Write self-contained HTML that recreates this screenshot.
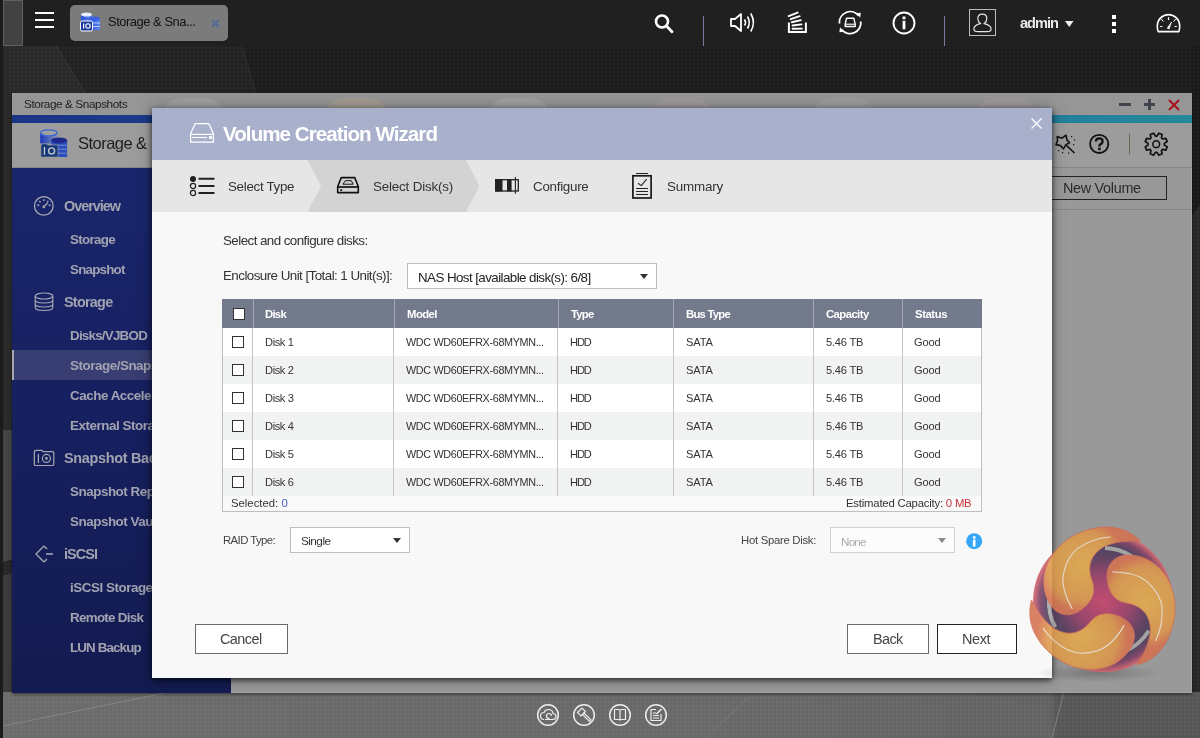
<!DOCTYPE html>
<html><head><meta charset="utf-8">
<style>
*{margin:0;padding:0;box-sizing:border-box}
html,body{width:1200px;height:738px;overflow:hidden}
body{position:relative;background:#242424;font-family:"Liberation Sans",sans-serif}
.a{position:absolute}
.t{position:absolute;white-space:nowrap;font-family:"Liberation Sans",sans-serif;will-change:transform}
.dots{background-image:radial-gradient(rgba(255,255,255,0.03) 1px, transparent 1.2px);background-size:4px 4px}
svg{position:absolute;overflow:visible}
</style></head><body>

<!-- ============ DESKTOP ============ -->
<div class="a" style="left:0;top:46px;width:1200px;height:692px;background:#1d1d1d"></div>
<svg style="left:0;top:0" width="1200" height="738">
<polygon points="3,46 56,46 85,93 12,93 12,430 3,430" fill="#292929"/>
<polygon points="56,46 242,46 256,93 85,93" fill="#232323"/>
<polygon points="3,420 12,415 12,560 3,562" fill="#424242"/>
<polygon points="3,430 12,430 12,415 3,420" fill="#292929"/>
<polygon points="3,575 12,573 12,692 3,692" fill="#3a3a3a"/>
<polygon points="3,562 12,560 12,573 3,575" fill="#262626"/>
<polygon points="1192,46 1200,46 1200,205 1192,215" fill="#1a1a1a"/>
<polygon points="1192,215 1200,205 1200,692 1192,692" fill="#282828"/>
</svg>
<div class="a dots" style="left:0;top:46px;width:1200px;height:646px"></div>
<div class="a" style="left:0;top:0;width:3px;height:738px;background:#1a1c1c"></div>
<!-- bottom band -->
<div class="a" style="left:3px;top:692px;width:1197px;height:46px;background:linear-gradient(90deg,#6c6c6c 0%,#696969 60%,#636363 87.5%,#575757 88%,#575757 100%)"></div><div class="a" style="left:3px;top:692px;width:1197px;height:46px;background-image:radial-gradient(rgba(255,255,255,0.045) 0.9px, transparent 1.3px);background-size:4px 4px"></div>
<svg style="left:0;top:0" width="1200" height="738"><line x1="3" y1="726" x2="170" y2="692" stroke="#8a8a8a" stroke-width="0.8"/><line x1="1064" y1="692" x2="1052" y2="738" stroke="#8a8a8a" stroke-width="0.8"/><line x1="755" y1="692" x2="705" y2="738" stroke="#7e7e7e" stroke-width="0.7"/><line x1="56" y1="46" x2="85" y2="93" stroke="#3c3c3c" stroke-width="0.9"/><line x1="242" y1="46" x2="256" y2="93" stroke="#333" stroke-width="0.8"/></svg>

<!-- ============ TOP BAR ============ -->
<div class="a" style="left:0;top:0;width:1200px;height:46px;background:#202020"></div>
<div class="a" style="left:0;top:0;width:3px;height:46px;background:#1a1c1c"></div>
<div class="a" style="left:3px;top:0;width:20px;height:46px;background:#424242;border:1px solid #5f5f5f"></div>
<!-- hamburger -->
<div class="a" style="left:35px;top:12px;width:19px;height:2px;background:#fff"></div>
<div class="a" style="left:35px;top:19px;width:19px;height:2px;background:#fff"></div>
<div class="a" style="left:35px;top:26px;width:19px;height:2px;background:#fff"></div>
<!-- tab -->
<div class="a" style="left:70px;top:5px;width:158px;height:36px;background:#7b7b7b;border-radius:5px"></div>
<svg style="left:80px;top:12px" width="20" height="20" viewBox="0 0 20 20">
  <defs><linearGradient id="dbg" x1="0" x2="1"><stop offset="0" stop-color="#2a4fd8"/><stop offset="1" stop-color="#5a86f0"/></linearGradient></defs>
  <rect x="1" y="2" width="11" height="12" fill="url(#dbg)"/><ellipse cx="6.5" cy="2.5" rx="5.5" ry="2" fill="#e8f0ff"/>
  <rect x="9" y="6" width="11" height="12" fill="url(#dbg)"/><ellipse cx="14.5" cy="6.5" rx="5.5" ry="2" fill="#3a5fe0"/>
  <line x1="12" y1="11" x2="20" y2="11" stroke="#cfe0ff" stroke-width="0.8"/><line x1="12" y1="14.5" x2="20" y2="14.5" stroke="#cfe0ff" stroke-width="0.8"/>
  <rect x="0.5" y="9" width="12" height="10" rx="1.5" fill="#1e3c9a" stroke="#fff" stroke-width="1"/>
  <rect x="3" y="11.5" width="1.2" height="5" fill="#fff"/><circle cx="8" cy="14" r="2.2" fill="none" stroke="#fff" stroke-width="1.1"/>
</svg>
<svg style="left:211px;top:19px" width="9" height="9" viewBox="0 0 9 9"><path d="M1 1L8 8M8 1L1 8" stroke="#4f6f96" stroke-width="2.2"/></svg>
<!-- search -->
<svg style="left:654px;top:13px" width="20" height="21" viewBox="0 0 20 21"><circle cx="8" cy="8.5" r="6" fill="none" stroke="#fff" stroke-width="2.6"/><path d="M12.5 13L18 18.8" stroke="#fff" stroke-width="2.8" stroke-linecap="round"/></svg>
<div class="a" style="left:703px;top:16px;width:1.2px;height:30px;background:#7a79a0"></div>
<!-- speaker -->
<svg style="left:730px;top:12px" width="26" height="21" viewBox="0 0 26 21"><path d="M1 7H5L11 2V19L5 14H1Z" fill="none" stroke="#fff" stroke-width="1.8" stroke-linejoin="round"/><path d="M14.5 7.5Q16.5 10.5 14.5 13.5" fill="none" stroke="#fff" stroke-width="1.6"/><path d="M17.5 4.5Q21 10.5 17.5 16.5" fill="none" stroke="#fff" stroke-width="1.6"/><path d="M20.8 1.5Q26 10.5 20.8 19.5" fill="none" stroke="#fff" stroke-width="1.6"/></svg>
<!-- stack -->
<svg style="left:780px;top:5px" width="90" height="35" viewBox="780 5 90 35">
<path d="M788.9 22.6V32.1H805.9V22.6" fill="none" stroke="#fff" stroke-width="2"/>
<path d="M788.6 16.1L797.6 12.6M790.7 19.2L799.6 16.2M791.8 22.2L800.8 20.1M792.6 25.5L801.5 24.4M792.6 28.8L801.9 28.6" stroke="#fff" stroke-width="1.9" stroke-linecap="round"/>
<!-- sync -->
<path d="M839.4 23.5A10.8 10.8 0 0 1 858.5 15.6" fill="none" stroke="#fff" stroke-width="1.8"/>
<path d="M860.8 21.5A10.8 10.8 0 0 1 841.6 29.5" fill="none" stroke="#fff" stroke-width="1.8"/>
<path d="M856.2 13.2L860.8 12.8L860.2 17.8Z" fill="#fff"/>
<path d="M844 31.8L839.4 32.2L840 27.2Z" fill="#fff"/>
<path d="M846.6 18.2H853.8L855.2 24.2V26.5H845.2V24.2Z" fill="none" stroke="#fff" stroke-width="1.4" stroke-linejoin="round"/>
<path d="M845.2 24.2H855.2" stroke="#fff" stroke-width="1.1"/>
</svg>
<!-- info -->
<svg style="left:892px;top:11px" width="24" height="24" viewBox="0 0 24 24"><circle cx="12" cy="12" r="10.5" fill="none" stroke="#fff" stroke-width="1.9"/><rect x="10.6" y="5.5" width="2.8" height="2.8" fill="#fff"/><rect x="10.6" y="9.8" width="2.8" height="8.5" fill="#fff"/></svg>
<div class="a" style="left:944px;top:16px;width:1.2px;height:30px;background:#7a79a0"></div>
<!-- avatar -->
<div class="a" style="left:969px;top:9px;width:27px;height:27px;border:1.5px solid #bcbcbc"></div>
<svg style="left:960px;top:5px" width="40" height="35" viewBox="960 5 40 35"><path d="M980.3 23.6C978.2 22 977.8 19.5 977.8 18.2C977.8 15.6 979.8 14.1 982.3 14.1C984.8 14.1 986.8 15.6 986.8 18.2C986.8 19.5 986.4 22 984.3 23.6C988 24.5 991.1 26.2 991.1 29C991.1 31 989.5 31.7 987 31.7H978C975.5 31.7 973.9 31 973.9 29C973.9 26.2 976.6 24.5 980.3 23.6Z" fill="none" stroke="#e4e4e4" stroke-width="1.2"/></svg>
<svg style="left:1065px;top:21px" width="9" height="7" viewBox="0 0 9 7"><path d="M0 0H8.5L4.25 6Z" fill="#eee"/></svg>
<div class="a" style="left:1112px;top:15px;width:4.2px;height:4px;background:#fff"></div>
<div class="a" style="left:1112px;top:22px;width:4.2px;height:4px;background:#fff"></div>
<div class="a" style="left:1112px;top:29px;width:4.2px;height:4px;background:#fff"></div>
<!-- gauge -->
<svg style="left:1150px;top:8px" width="40" height="30" viewBox="1150 8 40 30"><path d="M1158.2 31.6C1157.6 30.5 1157.3 27.5 1157.3 25.8A11.2 11.2 0 0 1 1179.7 25.8C1179.7 27.5 1179.4 30.5 1178.8 31.6Z" fill="none" stroke="#fff" stroke-width="1.6" stroke-linejoin="round"/><path d="M1168.5 17.3V19.9M1176.8 26.5H1174.6M1160.2 26.5H1162.4" stroke="#fff" stroke-width="1.2"/><path d="M1161.3 19L1163.4 21.6M1175.7 19L1173.6 21.6" stroke="#fff" stroke-width="1"/><path d="M1167.2 28.2L1171.6 22L1169.1 28.9Z" fill="#fff" stroke="#fff" stroke-width="0.6" stroke-linejoin="round"/></svg>
<div class="t" style="left:107.6px;top:15.66px;font-size:12.875px;line-height:12.875px;color:#111;letter-spacing:-0.438px;">Storage &amp; Sna...</div>
<div class="t" style="left:1019.7px;top:16.07px;font-size:14.626px;line-height:14.626px;color:#e8e8e8;font-weight:bold;letter-spacing:-1.008px;">admin</div>

<!-- ============ APP WINDOW ============ -->
<div class="a" style="left:12px;top:93px;width:1180px;height:600px;background:#999999;border-right:1px solid #a6a6a6;border-bottom:1px solid #a6a6a6;box-shadow:0 1px 3px rgba(0,0,0,0.55)"></div>
<div class="a" style="left:12px;top:93px;width:1180px;height:22px;background:#969696"></div>
<div class="a" style="left:12px;top:115px;width:1180px;height:8px;background:linear-gradient(90deg,#1a3486 0%,#1d4490 30%,#22729a 70%,#25889b 100%)"></div>
<div class="a" style="left:12px;top:123px;width:1180px;height:45px;background:#9c9c9c;border-bottom:1px solid #878787"></div>
<!-- faint circles on title bar -->
<div class="a" style="left:162px;top:98px;width:63px;height:40px;border-radius:20px;background:rgba(172,172,172,0.45)"></div>
<div class="a" style="left:325px;top:98px;width:63px;height:40px;border-radius:20px;background:rgba(180,165,140,0.45)"></div>
<div class="a" style="left:487px;top:98px;width:63px;height:40px;border-radius:20px;background:rgba(172,172,172,0.45)"></div>
<div class="a" style="left:650px;top:98px;width:63px;height:40px;border-radius:20px;background:rgba(178,162,166,0.35)"></div>
<div class="a" style="left:812px;top:98px;width:63px;height:40px;border-radius:20px;background:rgba(166,176,162,0.35)"></div>
<div class="a" style="left:975px;top:98px;width:63px;height:40px;border-radius:20px;background:rgba(178,162,170,0.35)"></div>
<!-- window controls -->
<div class="a" style="left:1119px;top:103px;width:12px;height:3px;background:#3f434a"></div>
<div class="a" style="left:1144px;top:103px;width:11px;height:3px;background:#3f434a"></div>
<div class="a" style="left:1148px;top:99px;width:3px;height:11px;background:#3f434a"></div>
<svg style="left:1168px;top:99px" width="12" height="12" viewBox="0 0 12 12"><path d="M1 1L11 11M11 1L1 11" stroke="#a8101a" stroke-width="2"/></svg>
<!-- header storage icon -->
<svg style="left:36px;top:125px" width="36" height="36" viewBox="36 125 36 36">
  <defs><linearGradient id="hg1" x1="0" x2="1"><stop offset="0" stop-color="#1a36c0"/><stop offset="0.6" stop-color="#3a5ac0" stop-opacity="0.7"/><stop offset="1" stop-color="#6a80c0" stop-opacity="0.3"/></linearGradient></defs>
  <path d="M40.2 132.8V143.5H57.6V132.8A8.7 3.4 0 0 1 40.2 132.8Z" fill="url(#hg1)"/>
  <ellipse cx="48.9" cy="132.8" rx="8.2" ry="3" fill="#a0a0a0" stroke="#3a66d0" stroke-width="1.2"/>
  <path d="M51.3 140.4V157H67.1V140.4Z" fill="#2a4cc0"/>
  <path d="M51.3 145.2H67.1M51.3 149.2H67.1M51.3 153.2H67.1" stroke="#8090c8" stroke-width="0.9"/>
  <ellipse cx="59.2" cy="140.4" rx="7.9" ry="3" fill="#20288c"/>
  <path d="M40.9 157V145H41.5V143.8H47.5V145H58V157Z" fill="#163a78" stroke="#a0a0a0" stroke-width="0.6"/>
  <rect x="43.8" y="147" width="1.3" height="7.8" fill="#c4c6cc"/>
  <circle cx="51.6" cy="150.9" r="3" fill="none" stroke="#c4c6cc" stroke-width="1.4"/>
</svg>
<!-- right header icons -->
<svg style="left:1052px;top:130px" width="30" height="28" viewBox="1052 130 30 28"><path d="M1057.2 136.6L1062 138.2L1066 135.2L1067 140.2L1069.5 142.6L1065.6 145L1063.5 149L1060.5 145.6L1056 144.6L1057.6 140.5Z" fill="none" stroke="#111" stroke-width="1.6" stroke-linejoin="round"/><path d="M1066.6 145.6L1074.5 153" stroke="#111" stroke-width="1.6"/><g fill="#111"><rect x="1071" y="136" width="1.2" height="1.2"/><rect x="1074" y="139.3" width="1.2" height="1.2"/><rect x="1073" y="144" width="1.2" height="1.2"/><rect x="1058" y="150" width="1.2" height="1.2"/><rect x="1062" y="152" width="1.2" height="1.2"/><rect x="1068" y="152.5" width="1.2" height="1.2"/></g></svg>
<svg style="left:1089px;top:134px" width="21" height="21" viewBox="0 0 21 21"><circle cx="10.2" cy="9.9" r="9.1" fill="none" stroke="#111" stroke-width="1.8"/><path d="M6.9 7.6Q6.9 4.3 10.2 4.3Q13.6 4.3 13.6 7.2Q13.6 9.1 11.6 10.1Q10.4 10.8 10.4 12.5" fill="none" stroke="#111" stroke-width="2.3"/><rect x="9.1" y="13.6" width="2.6" height="2.6" fill="#111"/></svg>
<div class="a" style="left:1129px;top:134px;width:1.2px;height:19.5px;background:#6b6650"></div>
<svg style="left:1140px;top:128px" width="32" height="32" viewBox="1140 128 32 32"><path d="M1156.99 136.04 L1158.84 133.21 L1162.10 134.57 L1161.42 137.87 L1162.53 138.98 L1165.83 138.30 L1167.19 141.56 L1164.36 143.41 L1164.36 144.99 L1167.19 146.84 L1165.83 150.10 L1162.53 149.42 L1161.42 150.53 L1162.10 153.83 L1158.84 155.19 L1156.99 152.36 L1155.41 152.36 L1153.56 155.19 L1150.30 153.83 L1150.98 150.53 L1149.87 149.42 L1146.57 150.10 L1145.21 146.84 L1148.04 144.99 L1148.04 143.41 L1145.21 141.56 L1146.57 138.30 L1149.87 138.98 L1150.98 137.87 L1150.30 134.57 L1153.56 133.21 L1155.41 136.04Z" fill="none" stroke="#111" stroke-width="1.7" stroke-linejoin="round"/><circle cx="1156.2" cy="144.2" r="3.4" fill="none" stroke="#111" stroke-width="1.5"/></svg>
<div class="a" style="left:1052px;top:209px;width:140px;height:1px;background:#878787"></div>
<div class="a" style="left:1036px;top:176px;width:131px;height:24px;border:1.4px solid #222"></div>
<!-- sidebar -->
<div class="a" style="left:12px;top:168px;width:219px;height:525px;background:linear-gradient(180deg,#1a266c 0%,#172162 40%,#131b50 100%)"></div>
<div class="a" style="left:12px;top:350px;width:219px;height:30px;background:#383d72"></div>
<div class="a" style="left:12px;top:350px;width:2px;height:30px;background:#a8a8b0"></div>
<!-- sidebar icons -->
<svg style="left:30px;top:190px" width="30" height="30" viewBox="30 190 30 30"><circle cx="43.8" cy="205.9" r="9.3" fill="none" stroke="#a8a8b0" stroke-width="1.3"/><g stroke="#a8a8b0" stroke-width="1.4"><path d="M43.8 199.2V200.9M39.3 200.9L40.6 202.4M48.3 200.9L47 202.4M37.2 205.2H39.2M48.6 205.2H50.6"/></g><path d="M43.8 206.8L47.6 203" stroke="#a8a8b0" stroke-width="1.3"/><circle cx="43.8" cy="206.9" r="1.3" fill="#a8a8b0"/></svg>
<svg style="left:34px;top:292px" width="20" height="20" viewBox="0 0 20 20"><ellipse cx="10" cy="4" rx="8.8" ry="3" fill="none" stroke="#a4a5b4" stroke-width="1.2"/><path d="M1.2 4V15.5Q1.2 18.5 10 18.5Q18.8 18.5 18.8 15.5V4M1.2 8Q1.2 11 10 11Q18.8 11 18.8 8M1.2 12Q1.2 15 10 15Q18.8 15 18.8 12" fill="none" stroke="#a4a5b4" stroke-width="1.2"/></svg>
<svg style="left:30px;top:440px" width="30" height="30" viewBox="30 440 30 30"><path d="M34.3 464.2V452.2Q34.3 450.4 36.1 450.4H41.8L42.9 451.6H52.4Q53.8 451.6 53.8 453V464.2Q53.8 465.5 52.4 465.5H35.6Q34.3 465.5 34.3 464.2Z" fill="none" stroke="#a8a8b0" stroke-width="1.2"/><path d="M38.4 454V463" stroke="#a8a8b0" stroke-width="1.2"/><circle cx="46.4" cy="458.4" r="4" fill="none" stroke="#a8a8b0" stroke-width="1.2"/><circle cx="46.4" cy="458.4" r="1.4" fill="#a8a8b0"/></svg>
<svg style="left:35px;top:545px" width="19" height="18" viewBox="0 0 19 18"><path d="M9 1L1 9L9 17M9 1L12 4M9 17L12 14" fill="none" stroke="#a4a5b4" stroke-width="1.4"/><path d="M11 9H18" stroke="#a4a5b4" stroke-width="1.6"/></svg>
<div class="t" style="left:24.4px;top:98.63px;font-size:11.845px;line-height:11.845px;color:#222;letter-spacing:-0.455px;">Storage &amp; Snapshots</div>
<div class="t" style="left:77.6px;top:135.39px;font-size:16.48px;line-height:16.48px;color:#1c1c1c;letter-spacing:-0.519px;">Storage &amp;</div>
<div class="t" style="left:1062.9px;top:181.34px;font-size:14.42px;line-height:14.42px;color:#2a2a2a;letter-spacing:-0.308px;">New Volume</div>
<div class="t" style="left:64.1px;top:199.44px;font-size:14.42px;line-height:14.42px;color:#a2a3b0;font-weight:bold;letter-spacing:-1.011px;">Overview</div>
<div class="t" style="left:70.0px;top:232.82px;font-size:13.39px;line-height:13.39px;color:#a2a3b0;font-weight:bold;letter-spacing:-0.702px;">Storage</div>
<div class="t" style="left:70.0px;top:262.82px;font-size:13.39px;line-height:13.39px;color:#a2a3b0;font-weight:bold;letter-spacing:-0.791px;">Snapshot</div>
<div class="t" style="left:64.1px;top:295.44px;font-size:14.42px;line-height:14.42px;color:#a2a3b0;font-weight:bold;letter-spacing:-0.740px;">Storage</div>
<div class="t" style="left:70.0px;top:328.82px;font-size:13.39px;line-height:13.39px;color:#a2a3b0;font-weight:bold;letter-spacing:-0.770px;">Disks/VJBOD</div>
<div class="t" style="left:70.0px;top:358.82px;font-size:13.39px;line-height:13.39px;color:#a2a3b0;font-weight:bold;letter-spacing:-0.45px;">Storage/Snapshots</div>
<div class="t" style="left:70.0px;top:388.82px;font-size:13.39px;line-height:13.39px;color:#a2a3b0;font-weight:bold;letter-spacing:-0.45px;">Cache Acceleration</div>
<div class="t" style="left:70.0px;top:418.82px;font-size:13.39px;line-height:13.39px;color:#a2a3b0;font-weight:bold;letter-spacing:-0.45px;">External Storage</div>
<div class="t" style="left:64.1px;top:451.44px;font-size:14.42px;line-height:14.42px;color:#a2a3b0;font-weight:bold;letter-spacing:-0.3px;">Snapshot Backup</div>
<div class="t" style="left:70.0px;top:485.12px;font-size:13.39px;line-height:13.39px;color:#a2a3b0;font-weight:bold;letter-spacing:-0.45px;">Snapshot Replica</div>
<div class="t" style="left:70.0px;top:515.12px;font-size:13.39px;line-height:13.39px;color:#a2a3b0;font-weight:bold;letter-spacing:-0.45px;">Snapshot Vault</div>
<div class="t" style="left:64.1px;top:546.94px;font-size:14.42px;line-height:14.42px;color:#a2a3b0;font-weight:bold;letter-spacing:-0.935px;">iSCSI</div>
<div class="t" style="left:70.0px;top:580.82px;font-size:13.39px;line-height:13.39px;color:#a2a3b0;font-weight:bold;letter-spacing:-0.45px;">iSCSI Storage</div>
<div class="t" style="left:70.0px;top:611.12px;font-size:13.39px;line-height:13.39px;color:#a2a3b0;font-weight:bold;letter-spacing:-0.703px;">Remote Disk</div>
<div class="t" style="left:70.0px;top:641.12px;font-size:13.39px;line-height:13.39px;color:#a2a3b0;font-weight:bold;letter-spacing:-0.881px;">LUN Backup</div>

<!-- ============ MODAL ============ -->
<div class="a" style="left:152px;top:108px;width:900px;height:570px;background:#f8f8f8;box-shadow:0 2px 6px rgba(0,0,0,0.7), 0 0 16px rgba(0,0,0,0.25)"></div>
<div class="a" style="left:152px;top:108px;width:900px;height:52px;background:#a9b0cc"></div>
<div class="a" style="left:152px;top:160px;width:900px;height:52px;background:#e6e6e6"></div>
<svg style="left:152px;top:160px" width="900" height="52" viewBox="0 0 900 52"><path d="M155.5 0H314L327.5 26L314 52H155.5L169 26Z" fill="#d3d3d3"/></svg>
<!-- title icon -->
<svg style="left:185px;top:118px" width="35" height="30" viewBox="185 118 35 30"><path d="M195.3 123.6H208.7L213.4 133.6V142.2H190.6V133.6Z" fill="none" stroke="#fff" stroke-width="1.25" stroke-linejoin="round"/><path d="M190.6 134.4H213.4" stroke="#fff" stroke-width="1.25"/><path d="M192.1 137.5H207" stroke="#fff" stroke-width="1.1"/><rect x="209" y="136.1" width="2.8" height="2.8" fill="#fff"/></svg>
<svg style="left:1031px;top:118px" width="11" height="11" viewBox="0 0 11 11"><path d="M0.5 0.5L10.5 10.5M10.5 0.5L0.5 10.5" stroke="#fff" stroke-width="1.3"/></svg>
<!-- step icons -->
<svg style="left:189px;top:175px" width="26" height="22" viewBox="0 0 26 22"><circle cx="4" cy="4" r="3" fill="#222"/><circle cx="4" cy="11" r="2.6" fill="none" stroke="#222" stroke-width="1.2"/><circle cx="4" cy="18" r="2.6" fill="none" stroke="#222" stroke-width="1.2"/><path d="M9.5 3.7H25.5M9.5 11H25.5M9.5 18H25.5" stroke="#222" stroke-width="2"/></svg>
<svg style="left:332px;top:172px" width="32" height="26" viewBox="332 172 32 26"><path d="M341.3 177.6H354.7L358.3 186.5V192.6H337.7V186.5Z" fill="none" stroke="#111" stroke-width="1.6" stroke-linejoin="round"/><path d="M337.7 187H358.3" stroke="#111" stroke-width="1.7"/><path d="M345.4 180.7H351.3L353.2 184.2H342.9Z" fill="none" stroke="#111" stroke-width="1"/><rect x="340.3" y="189.2" width="1.8" height="1.8" fill="#111"/></svg>
<svg style="left:490px;top:170px" width="40" height="30" viewBox="490 170 40 30"><rect x="495.7" y="179.7" width="22.6" height="11.3" fill="none" stroke="#222" stroke-width="1.3"/><rect x="495.1" y="179.1" width="7.4" height="12.4" fill="#222"/><rect x="507" y="179.1" width="4.6" height="12.4" fill="#222"/><path d="M515.4 177.1V193.8" stroke="#222" stroke-width="1.1"/></svg>
<svg style="left:625px;top:168px" width="35" height="35" viewBox="625 168 35 35"><path d="M636.1 173.5H648" stroke="#222" stroke-width="1"/><rect x="632.9" y="175.8" width="18.2" height="22.2" fill="none" stroke="#1a1a1a" stroke-width="1.7"/><path d="M638 183.2L641.4 185.6L646.6 179.1" fill="none" stroke="#222" stroke-width="1.1"/><path d="M636.1 188.5H648M636.1 191.5H648M636.1 194.5H648" stroke="#222" stroke-width="1"/></svg>
<!-- dropdown enclosure -->
<div class="a" style="left:407px;top:263px;width:250px;height:26px;background:#fff;border:1px solid #bdbdbd"></div>
<svg style="left:640px;top:274px" width="8" height="5" viewBox="0 0 8 5"><path d="M0 0H8L4 5Z" fill="#333"/></svg>
<!-- table -->
<div class="a" style="left:222px;top:299px;width:760px;height:213px;background:#f9f9f9;border:1px solid #bfbfbf"></div>
<div class="a" style="left:222px;top:299px;width:760px;height:29px;background:#737a8b"></div>
<div class="a" style="left:223px;top:328px;width:758px;height:28px;background:#ffffff"></div>
<div class="a" style="left:223px;top:356px;width:758px;height:28px;background:#f1f3f2"></div>
<div class="a" style="left:223px;top:384px;width:758px;height:28px;background:#ffffff"></div>
<div class="a" style="left:223px;top:412px;width:758px;height:28px;background:#f1f3f2"></div>
<div class="a" style="left:223px;top:440px;width:758px;height:28px;background:#ffffff"></div>
<div class="a" style="left:223px;top:468px;width:758px;height:28px;background:#f1f3f2"></div>
<!-- column dividers header -->
<div class="a" style="left:253px;top:299px;width:1px;height:29px;background:#a3a8b8"></div>
<div class="a" style="left:394px;top:299px;width:1px;height:29px;background:#a3a8b8"></div>
<div class="a" style="left:558px;top:299px;width:1px;height:29px;background:#a3a8b8"></div>
<div class="a" style="left:673px;top:299px;width:1px;height:29px;background:#a3a8b8"></div>
<div class="a" style="left:813px;top:299px;width:1px;height:29px;background:#a3a8b8"></div>
<div class="a" style="left:902px;top:299px;width:1px;height:29px;background:#a3a8b8"></div>
<!-- column dividers body -->
<div class="a" style="left:252px;top:328px;width:1px;height:168px;background:#c4c4c4"></div>
<div class="a" style="left:393px;top:328px;width:1px;height:168px;background:#c4c4c4"></div>
<div class="a" style="left:557px;top:328px;width:1px;height:168px;background:#c4c4c4"></div>
<div class="a" style="left:673px;top:328px;width:1px;height:168px;background:#c4c4c4"></div>
<div class="a" style="left:813px;top:328px;width:1px;height:168px;background:#c4c4c4"></div>
<div class="a" style="left:902px;top:328px;width:1px;height:168px;background:#c4c4c4"></div>
<!-- checkboxes -->
<div class="a" style="left:233px;top:308px;width:12px;height:12px;background:#fff;border:1.3px solid #333"></div>
<div class="a" style="left:232px;top:336px;width:12px;height:12px;background:#fff;border:1.3px solid #333"></div>
<div class="a" style="left:232px;top:364px;width:12px;height:12px;background:#fff;border:1.3px solid #333"></div>
<div class="a" style="left:232px;top:392px;width:12px;height:12px;background:#fff;border:1.3px solid #333"></div>
<div class="a" style="left:232px;top:420px;width:12px;height:12px;background:#fff;border:1.3px solid #333"></div>
<div class="a" style="left:232px;top:448px;width:12px;height:12px;background:#fff;border:1.3px solid #333"></div>
<div class="a" style="left:232px;top:476px;width:12px;height:12px;background:#fff;border:1.3px solid #333"></div>
<!-- raid / hot spare -->
<div class="a" style="left:290px;top:527px;width:120px;height:26px;background:#fff;border:1px solid #bdbdbd"></div>
<svg style="left:393px;top:538px" width="8" height="5" viewBox="0 0 8 5"><path d="M0 0H8L4 5Z" fill="#333"/></svg>
<div class="a" style="left:830px;top:527px;width:125px;height:26px;background:#fcfcfc;border:1px solid #d2d2d2"></div>
<svg style="left:938px;top:537.8px" width="8" height="5" viewBox="0 0 8 5"><path d="M0 0H8L4 5Z" fill="#8a8a8a"/></svg>
<svg style="left:965.5px;top:533px" width="17" height="17" viewBox="0 0 17 17"><circle cx="8.2" cy="8.2" r="8" fill="#36a6f8"/><rect x="6.9" y="3.2" width="2.6" height="2.4" fill="#fff"/><rect x="6.9" y="6.6" width="2.6" height="7" fill="#fff"/></svg>
<!-- buttons -->
<div class="a" style="left:195px;top:624px;width:93px;height:30px;background:#fff;border:1px solid #6a6a6a"></div>
<div class="a" style="left:847px;top:624px;width:82px;height:30px;background:#fff;border:1px solid #6a6a6a"></div>
<div class="a" style="left:937px;top:624px;width:80px;height:30px;background:#fff;border:1.3px solid #222"></div>
<div class="t" style="left:222.5px;top:124.44px;font-size:20.6px;line-height:20.6px;color:#ffffff;font-weight:bold;letter-spacing:-0.960px;">Volume Creation Wizard</div>
<div class="t" style="left:227.5px;top:180.02px;font-size:13.39px;line-height:13.39px;color:#333;letter-spacing:-0.316px;">Select Type</div>
<div class="t" style="left:373.0px;top:180.02px;font-size:13.39px;line-height:13.39px;color:#333;letter-spacing:-0.173px;">Select Disk(s)</div>
<div class="t" style="left:532.5px;top:180.02px;font-size:13.39px;line-height:13.39px;color:#333;letter-spacing:-0.281px;">Configure</div>
<div class="t" style="left:667.0px;top:180.02px;font-size:13.39px;line-height:13.39px;color:#333;letter-spacing:-0.164px;">Summary</div>
<div class="t" style="left:222.5px;top:234.12px;font-size:13.39px;line-height:13.39px;color:#333;letter-spacing:-0.564px;">Select and configure disks:</div>
<div class="t" style="left:222.5px;top:269.32px;font-size:13.39px;line-height:13.39px;color:#333;letter-spacing:-0.553px;">Enclosure Unit [Total: 1 Unit(s)]:</div>
<div class="t" style="left:417.5px;top:270.62px;font-size:13.39px;line-height:13.39px;color:#222;letter-spacing:-0.581px;">NAS Host [available disk(s): 6/8]</div>
<div class="t" style="left:265.0px;top:309.27px;font-size:11.33px;line-height:11.33px;color:#ffffff;font-weight:bold;letter-spacing:-0.746px;">Disk</div>
<div class="t" style="left:407.0px;top:309.27px;font-size:11.33px;line-height:11.33px;color:#ffffff;font-weight:bold;letter-spacing:-0.559px;">Model</div>
<div class="t" style="left:571.2px;top:309.27px;font-size:11.33px;line-height:11.33px;color:#ffffff;font-weight:bold;letter-spacing:-0.786px;">Type</div>
<div class="t" style="left:686.0px;top:309.27px;font-size:11.33px;line-height:11.33px;color:#ffffff;font-weight:bold;letter-spacing:-0.765px;">Bus Type</div>
<div class="t" style="left:826.0px;top:309.27px;font-size:11.33px;line-height:11.33px;color:#ffffff;font-weight:bold;letter-spacing:-0.576px;">Capacity</div>
<div class="t" style="left:914.8px;top:309.27px;font-size:11.33px;line-height:11.33px;color:#ffffff;font-weight:bold;letter-spacing:-0.425px;">Status</div>
<div class="t" style="left:264.9px;top:337.16px;font-size:11.1px;line-height:11.1px;color:#333;letter-spacing:-0.386px;">Disk 1</div>
<div class="t" style="left:406.2px;top:337.42px;font-size:10.8px;line-height:10.8px;color:#333;letter-spacing:-0.342px;">WDC WD60EFRX-68MYMN...</div>
<div class="t" style="left:569.8px;top:337.16px;font-size:11.1px;line-height:11.1px;color:#333;letter-spacing:-1.123px;">HDD</div>
<div class="t" style="left:685.5px;top:337.16px;font-size:11.1px;line-height:11.1px;color:#333;letter-spacing:-0.109px;">SATA</div>
<div class="t" style="left:825.5px;top:337.16px;font-size:11.1px;line-height:11.1px;color:#333;letter-spacing:-0.193px;">5.46 TB</div>
<div class="t" style="left:914.3px;top:337.16px;font-size:11.1px;line-height:11.1px;color:#333;letter-spacing:-0.180px;">Good</div>
<div class="t" style="left:264.9px;top:365.16px;font-size:11.1px;line-height:11.1px;color:#333;letter-spacing:-0.386px;">Disk 2</div>
<div class="t" style="left:406.2px;top:365.42px;font-size:10.8px;line-height:10.8px;color:#333;letter-spacing:-0.342px;">WDC WD60EFRX-68MYMN...</div>
<div class="t" style="left:569.8px;top:365.16px;font-size:11.1px;line-height:11.1px;color:#333;letter-spacing:-1.123px;">HDD</div>
<div class="t" style="left:685.5px;top:365.16px;font-size:11.1px;line-height:11.1px;color:#333;letter-spacing:-0.109px;">SATA</div>
<div class="t" style="left:825.5px;top:365.16px;font-size:11.1px;line-height:11.1px;color:#333;letter-spacing:-0.193px;">5.46 TB</div>
<div class="t" style="left:914.3px;top:365.16px;font-size:11.1px;line-height:11.1px;color:#333;letter-spacing:-0.180px;">Good</div>
<div class="t" style="left:264.9px;top:393.16px;font-size:11.1px;line-height:11.1px;color:#333;letter-spacing:-0.386px;">Disk 3</div>
<div class="t" style="left:406.2px;top:393.42px;font-size:10.8px;line-height:10.8px;color:#333;letter-spacing:-0.342px;">WDC WD60EFRX-68MYMN...</div>
<div class="t" style="left:569.8px;top:393.16px;font-size:11.1px;line-height:11.1px;color:#333;letter-spacing:-1.123px;">HDD</div>
<div class="t" style="left:685.5px;top:393.16px;font-size:11.1px;line-height:11.1px;color:#333;letter-spacing:-0.109px;">SATA</div>
<div class="t" style="left:825.5px;top:393.16px;font-size:11.1px;line-height:11.1px;color:#333;letter-spacing:-0.193px;">5.46 TB</div>
<div class="t" style="left:914.3px;top:393.16px;font-size:11.1px;line-height:11.1px;color:#333;letter-spacing:-0.180px;">Good</div>
<div class="t" style="left:264.9px;top:421.16px;font-size:11.1px;line-height:11.1px;color:#333;letter-spacing:-0.386px;">Disk 4</div>
<div class="t" style="left:406.2px;top:421.42px;font-size:10.8px;line-height:10.8px;color:#333;letter-spacing:-0.342px;">WDC WD60EFRX-68MYMN...</div>
<div class="t" style="left:569.8px;top:421.16px;font-size:11.1px;line-height:11.1px;color:#333;letter-spacing:-1.123px;">HDD</div>
<div class="t" style="left:685.5px;top:421.16px;font-size:11.1px;line-height:11.1px;color:#333;letter-spacing:-0.109px;">SATA</div>
<div class="t" style="left:825.5px;top:421.16px;font-size:11.1px;line-height:11.1px;color:#333;letter-spacing:-0.193px;">5.46 TB</div>
<div class="t" style="left:914.3px;top:421.16px;font-size:11.1px;line-height:11.1px;color:#333;letter-spacing:-0.180px;">Good</div>
<div class="t" style="left:264.9px;top:449.16px;font-size:11.1px;line-height:11.1px;color:#333;letter-spacing:-0.386px;">Disk 5</div>
<div class="t" style="left:406.2px;top:449.42px;font-size:10.8px;line-height:10.8px;color:#333;letter-spacing:-0.342px;">WDC WD60EFRX-68MYMN...</div>
<div class="t" style="left:569.8px;top:449.16px;font-size:11.1px;line-height:11.1px;color:#333;letter-spacing:-1.123px;">HDD</div>
<div class="t" style="left:685.5px;top:449.16px;font-size:11.1px;line-height:11.1px;color:#333;letter-spacing:-0.109px;">SATA</div>
<div class="t" style="left:825.5px;top:449.16px;font-size:11.1px;line-height:11.1px;color:#333;letter-spacing:-0.193px;">5.46 TB</div>
<div class="t" style="left:914.3px;top:449.16px;font-size:11.1px;line-height:11.1px;color:#333;letter-spacing:-0.180px;">Good</div>
<div class="t" style="left:264.9px;top:477.16px;font-size:11.1px;line-height:11.1px;color:#333;letter-spacing:-0.386px;">Disk 6</div>
<div class="t" style="left:406.2px;top:477.42px;font-size:10.8px;line-height:10.8px;color:#333;letter-spacing:-0.342px;">WDC WD60EFRX-68MYMN...</div>
<div class="t" style="left:569.8px;top:477.16px;font-size:11.1px;line-height:11.1px;color:#333;letter-spacing:-1.123px;">HDD</div>
<div class="t" style="left:685.5px;top:477.16px;font-size:11.1px;line-height:11.1px;color:#333;letter-spacing:-0.109px;">SATA</div>
<div class="t" style="left:825.5px;top:477.16px;font-size:11.1px;line-height:11.1px;color:#333;letter-spacing:-0.193px;">5.46 TB</div>
<div class="t" style="left:914.3px;top:477.16px;font-size:11.1px;line-height:11.1px;color:#333;letter-spacing:-0.180px;">Good</div>
<div class="t" style="left:231.2px;top:498.07px;font-size:11.33px;line-height:11.33px;color:#333;">Selected: <span style='color:#3a5bd0'>0</span></div>
<div class="t" style="left:845.9px;top:497.77px;font-size:11.33px;line-height:11.33px;color:#333;letter-spacing:-0.202px;">Estimated Capacity: <span style='color:#c8323c'>0 MB</span></div>
<div class="t" style="left:223.2px;top:535.27px;font-size:11.33px;line-height:11.33px;color:#444;letter-spacing:-0.558px;">RAID Type:</div>
<div class="t" style="left:301.2px;top:535.67px;font-size:11.8px;line-height:11.8px;color:#333;letter-spacing:-0.559px;">Single</div>
<div class="t" style="left:740.9px;top:535.37px;font-size:11.33px;line-height:11.33px;color:#444;letter-spacing:-0.281px;">Hot Spare Disk:</div>
<div class="t" style="left:841.0px;top:535.84px;font-size:11.6px;line-height:11.6px;color:#aaa;letter-spacing:-0.740px;">None</div>
<div class="t" style="left:220.3px;top:632.24px;font-size:14.42px;line-height:14.42px;color:#444;letter-spacing:-0.529px;">Cancel</div>
<div class="t" style="left:873.0px;top:632.44px;font-size:14.42px;line-height:14.42px;color:#444;letter-spacing:-0.577px;">Back</div>
<div class="t" style="left:961.7px;top:632.44px;font-size:14.42px;line-height:14.42px;color:#444;letter-spacing:-0.375px;">Next</div>

<!-- ============ DOCK ============ -->
<svg style="left:520px;top:695px" width="160" height="40" viewBox="520 695 160 40">
<g fill="none" stroke="#ececec" stroke-width="1.5">
<circle cx="548" cy="715" r="10.3"/><circle cx="584" cy="715" r="10.3"/><circle cx="620" cy="715" r="10.3"/><circle cx="656" cy="715" r="10.3"/>
</g>
<g fill="none" stroke="#ececec" stroke-width="1.2">
<path d="M545 719.5H553Q556 719.5 556 716.5Q556 713.5 553 713.5Q552.5 709.5 548.5 709.5Q545 709.5 544 712.5Q540.5 712.5 540.5 716Q540.5 719.5 544 719.5"/>
<path d="M549.5 718.5Q546.5 718.5 546.5 716Q546.5 713.5 549 713.5Q551.5 713.5 551.5 716"/>
<path d="M577.5 712.5L582 708L585.5 711.5L581 716Z"/><path d="M582 714L589.5 721.5L591 720L583.5 712.5"/>
<path d="M614.5 709.5H618.5Q620 709.5 620 711V720.5M625.5 709.5H621.5Q620 709.5 620 711M614.5 709.5V719.5H618.5Q620 719.5 620 720.5Q620 719.5 621.5 719.5H625.5V709.5"/>
<path d="M656 709.5H651V720.5H661V714"/><path d="M653 713H656M653 715.5H659M653 718H659"/><path d="M656.5 714L661.5 709" stroke-width="1.6"/>
</g>
</svg>

<!-- ============ LOGO ============ -->
<svg style="left:1022.5px;top:522px" width="160" height="170" viewBox="-80 -80 160 170">
  <defs>
    <radialGradient id="ctr" cx="0" cy="0" r="58" gradientUnits="userSpaceOnUse"><stop offset="0" stop-color="#c8426a"/><stop offset="0.45" stop-color="#9a3c66"/><stop offset="0.8" stop-color="#55395c"/><stop offset="1" stop-color="#433a56"/></radialGradient>
    <radialGradient id="rng" cx="0" cy="0" r="70" gradientUnits="userSpaceOnUse"><stop offset="0.78" stop-color="#433a56"/><stop offset="0.9" stop-color="#7a3c62"/><stop offset="1" stop-color="#d8646c"/></radialGradient>
    <radialGradient id="lob" cx="42" cy="0" r="46" gradientUnits="userSpaceOnUse"><stop offset="0" stop-color="#e4ac4c"/><stop offset="0.75" stop-color="#dc964a"/><stop offset="1" stop-color="#d4704e"/></radialGradient>
    <radialGradient id="shd" cx="0.5" cy="0.5" r="0.5"><stop offset="0" stop-color="rgba(0,0,0,0.22)"/><stop offset="1" stop-color="rgba(0,0,0,0)"/></radialGradient>
  </defs>
  <ellipse cx="-6" cy="71" rx="62" ry="9" fill="url(#shd)"/>
  <g opacity="0.88">
  <circle cx="0" cy="0" r="63" fill="none" stroke="url(#rng)" stroke-width="14"/>
  <circle cx="0" cy="0" r="57" fill="url(#ctr)"/>
  <g id="gap"><path d="M2 -54A54 54 0 0 1 30 -45" fill="none" stroke="#a4a4a4" stroke-width="4"/></g>
  <use href="#gap" transform="rotate(120)"/>
  <use href="#gap" transform="rotate(240)"/>
  <g id="lb">
    <path d="M4 -26C4 -39 13 -47 25 -47C47 -47 64 -32 70 -10C76 11 69 39 53 53C47 58 41 61 34 63C42 50 49 36 47 23C45 10 36 3 23 1C10 -1 4 -13 4 -26Z" fill="url(#lob)" stroke="#d26a54" stroke-width="0.8"/>
    <path d="M9.4 -30C25 -30 38 -26 45 -19.4C53 -12 58 -4 59 5C60 18 57 30 52.5 39" fill="none" stroke="#efe4d6" stroke-width="1.1"/>
  </g>
  <use href="#lb" transform="rotate(120)"/>
  <use href="#lb" transform="rotate(240)"/>
  </g>
</svg>

</body></html>
